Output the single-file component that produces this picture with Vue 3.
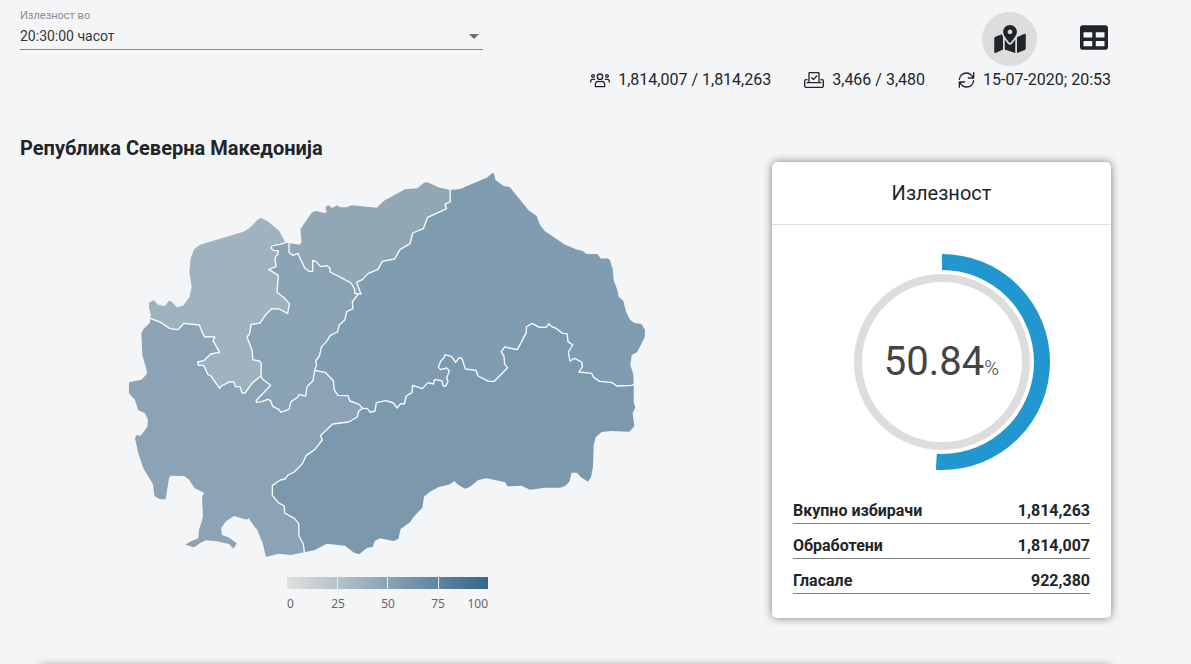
<script setup>
import { ref } from 'vue'

const time = ref('20:30:00 часот')
const view = ref('map')

// Borders between regions and along the country outline, as point lists.
const edges = {
  pologSouth: '90,460 120,471 150,491 174,494 192,475 238,480 248,505 254,516 285,515 279,527 299,562 272,567 251,587 233,591 235,601 251,601 263,628 273,633 299,670 304,663 330,650 342,651 346,665 360,665 366,684 375,684 396,655 423,632',
  pologEast: '497,233 480,238 457,242 453,249 462,257 475,257 474,267 465,277 468,305 446,313 475,331 471,382 494,400 508,416 503,446 478,432 455,431 438,448 420,474 393,479 389,506 381,516 397,558 398,584 418,588 424,595 423,632',
  northWest: '507,235 507,262 518,271 534,265 541,282 555,310 567,319 578,319 578,286 588,290 602,305 621,302 630,310 630,321 663,338 693,354 704,372 704,385 715,387',
  northEast: '990,75 991,110 975,118 980,131 923,157 910,191 878,204 870,236 840,254 824,282 787,289 774,313 744,326 728,343 710,352 723,387 715,387',
  centreEast: '715,387 697,411 699,431 680,440 675,464 658,480 652,501 631,511 620,529 605,545 598,573 587,588 590,600 584,616',
  centreSouth: '423,632 428,643 452,661 408,707 410,712 425,710 444,703 452,707 458,724 478,734 482,742 507,733 513,710 534,696 536,689 557,693 561,665 579,647 584,616',
  southNorth: '584,616 616,622 640,647 643,675 654,691 684,692 690,708 717,718 728,730',
  eastSouth: '728,730 742,731 751,742 765,738 769,713 798,707 820,714 831,729 842,716 853,717 859,693 876,683 878,661 907,671 924,653 940,657 944,644 965,647 970,663 978,663 984,648 980,640 988,617 980,609 962,614 955,606 963,587 972,578 975,569 995,575 1007,592 1018,578 1026,580 1036,612 1068,616 1074,633 1106,649 1123,649 1163,608 1154,598 1152,574 1144,560 1154,546 1192,554 1219,503 1219,486 1236,475 1258,487 1280,486 1286,476 1294,484 1310,491 1327,505 1341,506 1344,530 1358,540 1345,561 1350,588 1363,580 1385,591 1387,605 1377,621 1415,625 1421,637 1439,649 1477,653 1490,663 1535,661 1541,658',
  southEast: '728,730 716,738 712,756 686,771 638,777 601,812 607,825 585,853 558,872 548,895 523,921 504,930 495,942 481,945 457,962 457,991 475,1013 493,1023 494,1044 523,1060 536,1076 537,1113 550,1137 553,1162'
}

const coast = {
  polog: '90,460 93,450 87,430 87,413 101,405 115,420 135,423 146,408 154,409 171,427 189,422 208,397 215,367 208,320 212,280 222,253 240,239 370,200 390,188 415,162 424,159 445,170 477,197 497,233',
  north: '507,235 525,237 538,239 545,232 541,193 576,142 590,138 615,145 620,140 616,126 625,121 636,129 652,121 660,127 680,127 695,121 770,128 792,107 855,73 892,70 912,53 923,52 955,67 990,75',
  east: '990,75 1020,72 1100,38 1118,23 1123,28 1126,44 1150,63 1169,66 1225,135 1250,153 1260,180 1275,199 1335,239 1368,253 1388,258 1400,267 1432,267 1443,281 1463,280 1470,286 1478,312 1481,345 1492,375 1496,395 1510,407 1518,440 1530,464 1543,474 1564,477 1575,494 1574,517 1564,538 1551,562 1535,570 1531,600 1540,628 1541,658',
  southEast: '1541,658 1541,713 1546,727 1538,745 1543,783 1528,800 1475,798 1445,801 1427,817 1421,840 1419,905 1413,937 1404,950 1383,937 1371,923 1355,923 1348,950 1335,963 1320,968 1275,968 1230,974 1205,962 1162,964 1156,952 1100,940 1075,945 1050,965 1036,971 1015,960 1003,948 990,958 955,967 930,980 912,995 907,1028 880,1057 870,1072 842,1092 835,1122 820,1128 780,1120 764,1128 758,1146 742,1148 717,1168 702,1163 675,1142 620,1136 585,1155 553,1162',
  southWest: '553,1162 512,1170 475,1166 438,1176 428,1135 411,1093 402,1084 386,1059 380,1064 342,1053 318,1069 303,1090 306,1110 325,1117 350,1135 341,1151 327,1137 290,1129 257,1126 240,1135 222,1147 196,1139 210,1130 235,1120 237,1095 249,1055 246,995 253,984 224,970 208,945 193,933 152,932 147,939 137,1003 120,1003 103,993 99,958 70,910 55,865 45,820 50,810 62,812 82,785 84,765 75,745 54,735 45,705 27,685 27,652 65,644 80,627 81,620 67,570 64,505 70,493 90,473 90,460'
}

const back = (points) => points.split(' ').reverse().join(' ')
const ring = (...parts) => parts.join(' ')

const regions = [
  { id: 1, color: '#9fb2bf', points: ring(coast.polog, edges.pologEast, back(edges.pologSouth)) },
  { id: 2, color: '#91a7b6', points: ring(coast.north, edges.northEast, back(edges.northWest)) },
  { id: 3, color: '#89a2b4', points: ring(edges.northWest, edges.centreEast, back(edges.centreSouth), back(edges.pologEast)) },
  { id: 4, color: '#809cb1', points: ring(coast.east, back(edges.eastSouth), back(edges.southNorth), back(edges.centreEast), back(edges.northEast)) },
  { id: 5, color: '#8ba3b5', points: ring(edges.pologSouth, edges.centreSouth, edges.southNorth, edges.southEast, coast.southWest) },
  { id: 6, color: '#7c98ad', points: ring(edges.eastSouth, coast.southEast, back(edges.southEast)) }
]

const turnout = 50.84
const circumference = 2 * Math.PI * 100
const arc = `${(circumference * turnout) / 100} ${circumference}`

const rows = [
  { label: 'Вкупно избирачи', value: '1,814,263' },
  { label: 'Обработени', value: '1,814,007' },
  { label: 'Гласале', value: '922,380' }
]
</script>

<template>
  <main class="page">
    <header class="top">
      <div class="field">
        <label for="time">Излезност во</label>
        <select id="time" v-model="time">
          <option>20:30:00 часот</option>
        </select>
        <svg class="caret" viewBox="0 0 10 5" aria-hidden="true"><path d="M0 0h10L5 5z" /></svg>
      </div>
      <div class="tools">
        <div class="views">
          <button class="map-view" :class="{ active: view === 'map' }" aria-label="Мапа" @click="view = 'map'">
            <svg viewBox="0 0 576 512"><path d="M288 0c-69.59 0-126 56.41-126 126 0 56.26 82.35 158.8 113.9 196.02 6.39 7.54 17.82 7.54 24.2 0C331.65 284.8 414 182.26 414 126 414 56.41 357.59 0 288 0zm0 168c-23.2 0-42-18.8-42-42s18.8-42 42-42 42 18.8 42 42-18.8 42-42 42zM20.12 215.95A32.006 32.006 0 0 0 0 245.66v250.32c0 11.32 11.43 19.06 21.94 14.86L160 448V214.92c-8.84-15.98-16.07-31.54-21.25-46.42L20.12 215.95zM288 359.67c-14.07 0-27.38-6.18-36.51-16.96-19.66-23.2-40.57-49.62-59.49-76.72v182l192 64V266c-18.92 27.09-39.82 53.52-59.49 76.72-9.13 10.77-22.44 16.95-36.51 16.95zm266.06-198.51L416 224v288l139.88-55.95A31.996 31.996 0 0 0 576 426.34V176.02c0-11.32-11.43-19.06-21.94-14.86z" /></svg>
          </button>
          <button class="table-view" :class="{ active: view === 'table' }" aria-label="Табела" @click="view = 'table'">
            <svg viewBox="0 32 512 448"><path d="M464 32H48C21.49 32 0 53.49 0 80v352c0 26.51 21.49 48 48 48h416c26.51 0 48-21.49 48-48V80c0-26.51-21.49-48-48-48zM224 416H64v-96h160v96zm0-160H64v-96h160v96zm224 160H288v-96h160v96zm0-160H288v-96h160v96z" /></svg>
          </button>
        </div>
        <div class="stats">
          <span class="stat">
            <svg class="line users" viewBox="0 0 60 48">
              <circle cx="30" cy="14" r="8" />
              <circle cx="9" cy="12" r="4" />
              <circle cx="51" cy="12" r="4" />
              <path d="M16 43v-5c0-6 4-10 9-10 3 0 3 1 5 1s2-1 5-1c5 0 9 4 9 10v5q0 1-1 1H17q-1 0-1-1zM2 30v-2c0-4 3-6 6-6h6M58 30v-2c0-4-3-6-6-6h-6" />
            </svg>
            1,814,007 / 1,814,263
          </span>
          <span class="stat">
            <svg class="line vote" viewBox="0 0 60 48">
              <path d="M15 32V4q0-2 2-2h26q2 0 2 2v28M9 32h42M9 23H6q-4 0-4 4v15q0 4 4 4h48q4 0 4-4V27q0-4-4-4h-3M23 17l5 6 10-11" />
            </svg>
            3,466 / 3,480
          </span>
          <span class="stat">
            <svg class="line sync" viewBox="0 0 51 48">
              <path d="M4 22C5 11 14 3 25 3c8 0 16 5 20 13M47 2v16H31M47 26c-1 11-10 19-21 19-8 0-16-5-20-13M4 46V30h16" />
            </svg>
            15-07-2020; 20:53
          </span>
        </div>
      </div>
    </header>

    <div class="content">
      <section class="region">
        <h1>Република Северна Македонија</h1>
        <svg class="map" viewBox="0 0 1605 1200" role="img" aria-label="Република Северна Македонија">
          <polygon v-for="r in regions" :key="r.id" :points="r.points" :fill="r.color" />
          <polyline v-for="(points, name) in edges" :key="name" :points="points" class="border" />
        </svg>
        <div class="legend">
          <div class="scale"><i></i><i></i><i></i><i></i></div>
          <div class="ticks">
            <span>0</span><span>25</span><span>50</span><span>75</span><span>100</span>
          </div>
        </div>
      </section>

      <section class="card">
        <h2>Излезност</h2>
        <div class="gauge">
          <svg viewBox="0 0 216 216" aria-hidden="true">
            <circle class="track" cx="108" cy="108" r="84" />
            <circle class="value" cx="108" cy="108" r="100" :stroke-dasharray="arc" transform="rotate(-90 108 108)" />
          </svg>
          <p>{{ turnout }}<small>%</small></p>
        </div>
        <dl>
          <div v-for="row in rows" :key="row.label">
            <dt>{{ row.label }}</dt>
            <dd>{{ row.value }}</dd>
          </div>
        </dl>
      </section>
    </div>

    <section class="card next"></section>
  </main>
</template>

<style>
body {
  background: #f4f5f7;
}
</style>

<style scoped>
.page {
  box-sizing: border-box;
  height: 100vh;
  overflow: hidden;
  padding: 8px 80px 0 20px;
  color: #212529;
  font-family: Roboto, "Noto Sans", sans-serif;
}
.top {
  display: flex;
  justify-content: space-between;
}
.field {
  position: relative;
  width: 50%;
  max-width: 463px;
  align-self: flex-start;
}
.field label {
  display: block;
  font-size: 11px;
  line-height: 16px;
  color: #8c8d8f;
}
.field select {
  display: block;
  width: 100%;
  height: 26px;
  padding: 0 0 1px;
  border: 0;
  border-bottom: 1px solid #85878a;
  border-radius: 0;
  appearance: none;
  background: transparent;
  color: #333538;
  font: 14px Roboto, "Noto Sans", sans-serif;
}
.caret {
  position: absolute;
  right: 4px;
  bottom: 11px;
  width: 10px;
  height: 5px;
  fill: #6b6d70;
}
.views {
  display: flex;
  justify-content: flex-end;
  align-items: flex-start;
  gap: 40px;
  padding-top: 4px;
}
.views button {
  display: flex;
  align-items: center;
  justify-content: center;
  padding: 0;
  border: 0;
  background: none;
  color: #212529;
}
.views svg {
  fill: currentColor;
}
.views .map-view {
  width: 55px;
  height: 54px;
  border-radius: 50%;
}
.views .active {
  background: #dddddd;
}
.map-view svg {
  width: 32px;
  height: 28px;
}
.views .table-view {
  width: 34px;
  height: 50px;
}
.table-view svg {
  width: 28px;
  height: 25px;
}
.stats {
  display: flex;
  justify-content: flex-end;
  gap: 33px;
  font-size: 16px;
  font-weight: 400;
  line-height: 28px;
}
.stat {
  display: flex;
  align-items: center;
  gap: 8px;
  white-space: nowrap;
}
.line {
  height: 16px;
  fill: none;
  stroke: #212529;
  stroke-width: 4;
  stroke-linecap: round;
  stroke-linejoin: round;
}
.users,
.vote {
  width: 20px;
}
.sync {
  width: 17px;
}
.content {
  display: grid;
  grid-template-columns: minmax(0, 1fr) 339px;
  gap: 17px;
  align-items: start;
  padding-top: 40px;
}
h1 {
  margin: 0;
  font-size: 20px;
  font-weight: 700;
  line-height: 28px;
}
.map {
  display: block;
  width: 100%;
  max-width: 535px;
  margin: 3px auto 0;
}
.border {
  fill: none;
  stroke: #f8fcff;
  stroke-width: 4;
  stroke-linejoin: round;
}
.legend {
  width: 201px;
  margin: 12px auto 0;
}
.scale {
  display: flex;
  height: 12px;
  background: linear-gradient(to right, #e0e0e0, #33678b);
}
.scale i {
  flex: 1;
}
.scale i + i {
  border-left: 1px solid #e8eef3;
}
.ticks {
  display: grid;
  grid-template-columns: 26px 50px 50px 50px 25px;
  margin-top: 7px;
  color: #666666;
  font: 12px/16px "Noto Sans", sans-serif;
  text-align: center;
}
.ticks span:first-child {
  text-align: left;
}
.ticks span:last-child {
  text-align: right;
}
.card {
  border-radius: 5px;
  background: #ffffff;
  box-shadow: 0 0 9px rgba(0, 0, 0, 0.5);
}
.content .card {
  margin-top: 28px;
}
h2 {
  margin: 0;
  border-bottom: 1px solid #dddddd;
  font-size: 20px;
  font-weight: 400;
  line-height: 62px;
  text-align: center;
}
.gauge {
  display: grid;
  place-items: center;
  padding: 29px 0;
}
.gauge > * {
  grid-area: 1 / 1;
}
.gauge svg {
  width: 216px;
  height: 216px;
}
.gauge circle {
  fill: none;
}
.track {
  stroke: #dddddd;
  stroke-width: 8;
}
.value {
  stroke: #2297cf;
  stroke-width: 16;
}
.gauge p {
  margin: 0;
  padding-top: 6px;
  color: #444444;
  font-size: 40px;
  line-height: 48px;
}
.gauge small {
  font-size: 20px;
  font-weight: 300;
}
dl {
  margin: 0;
  padding: 0 21px 24px;
}
dl div {
  display: flex;
  justify-content: space-between;
  border-bottom: 1px solid #7c7e81;
  padding-top: 10px;
  font-size: 16px;
  font-weight: 700;
  line-height: 24px;
}
dl div:first-child {
  padding-top: 0;
}
dd {
  margin: 0;
}
.next {
  height: 120px;
  margin: 48px 0 0 20px;
}
</style>
